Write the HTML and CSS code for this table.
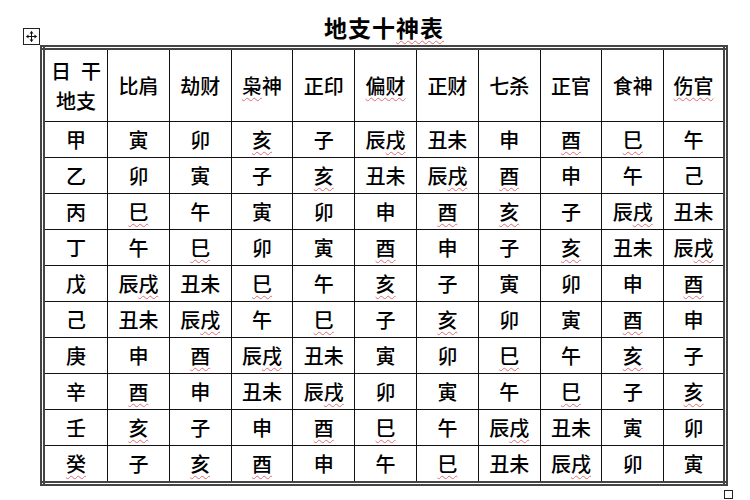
FILE: index.html
```html
<!DOCTYPE html>
<html lang="zh">
<head>
<meta charset="utf-8">
<link rel="stylesheet" href="styles.css">
</head>
<body>
<div class="page">
  <h1 class="title">地支十<span class="w">神表</span></h1>
  <div class="table-wrap">
    <span class="move-handle">
      <svg width="11" height="11" viewBox="0 0 11 11">
        <path d="M5.5 0.5 L5.5 10.5 M0.5 5.5 L10.5 5.5" stroke="#111" stroke-width="1" fill="none"/>
        <path d="M5.5 0 L3.5 2.5 L7.5 2.5 Z M5.5 11 L3.5 8.5 L7.5 8.5 Z M0 5.5 L2.5 3.5 L2.5 7.5 Z M11 5.5 L8.5 3.5 L8.5 7.5 Z" fill="#111"/>
      </svg>
    </span>
    <table class="shishen">
      <thead>
        <tr>
          <th class="corner">日&ensp;干<br>地支</th>
          <th>比肩</th>
          <th>劫财</th>
          <th><span class="w">枭</span>神</th>
          <th>正印</th>
          <th><span class="w">偏财</span></th>
          <th>正财</th>
          <th>七杀</th>
          <th>正官</th>
          <th>食神</th>
          <th><span class="w">伤官</span></th>
        </tr>
      </thead>
      <tbody>
        <tr><td>甲</td><td>寅</td><td>卯</td><td><span class="w">亥</span></td><td>子</td><td>辰<span class="w">戌</span></td><td>丑未</td><td>申</td><td><span class="w">酉</span></td><td><span class="w">巳</span></td><td>午</td></tr>
        <tr><td>乙</td><td>卯</td><td>寅</td><td>子</td><td><span class="w">亥</span></td><td>丑未</td><td>辰<span class="w">戌</span></td><td><span class="w">酉</span></td><td>申</td><td>午</td><td>己</td></tr>
        <tr><td>丙</td><td><span class="w">巳</span></td><td>午</td><td>寅</td><td>卯</td><td>申</td><td><span class="w">酉</span></td><td><span class="w">亥</span></td><td>子</td><td>辰<span class="w">戌</span></td><td>丑未</td></tr>
        <tr><td>丁</td><td>午</td><td><span class="w">巳</span></td><td>卯</td><td>寅</td><td><span class="w">酉</span></td><td>申</td><td>子</td><td><span class="w">亥</span></td><td>丑未</td><td>辰<span class="w">戌</span></td></tr>
        <tr><td>戊</td><td>辰<span class="w">戌</span></td><td>丑未</td><td><span class="w">巳</span></td><td>午</td><td><span class="w">亥</span></td><td>子</td><td>寅</td><td>卯</td><td>申</td><td><span class="w">酉</span></td></tr>
        <tr><td>己</td><td>丑未</td><td>辰<span class="w">戌</span></td><td>午</td><td><span class="w">巳</span></td><td>子</td><td><span class="w">亥</span></td><td>卯</td><td>寅</td><td><span class="w">酉</span></td><td>申</td></tr>
        <tr><td>庚</td><td>申</td><td><span class="w">酉</span></td><td>辰<span class="w">戌</span></td><td>丑未</td><td>寅</td><td>卯</td><td><span class="w">巳</span></td><td>午</td><td><span class="w">亥</span></td><td>子</td></tr>
        <tr><td>辛</td><td><span class="w">酉</span></td><td>申</td><td>丑未</td><td>辰<span class="w">戌</span></td><td>卯</td><td>寅</td><td>午</td><td><span class="w">巳</span></td><td>子</td><td><span class="w">亥</span></td></tr>
        <tr><td>壬</td><td><span class="w">亥</span></td><td>子</td><td>申</td><td><span class="w">酉</span></td><td><span class="w">巳</span></td><td>午</td><td>辰<span class="w">戌</span></td><td>丑未</td><td>寅</td><td>卯</td></tr>
        <tr><td><span class="w">癸</span></td><td>子</td><td><span class="w">亥</span></td><td><span class="w">酉</span></td><td>申</td><td>午</td><td><span class="w">巳</span></td><td>丑未</td><td>辰<span class="w">戌</span></td><td>卯</td><td>寅</td></tr>
      </tbody>
    </table>
    <span class="resize-handle"></span>
  </div>
</div>
</body>
</html>
```

FILE: styles.css
```css
html, body {
  margin: 0;
  padding: 0;
  background: #ffffff;
}

body {
  font-family: "Noto Sans CJK SC", "Noto Sans CJK JP", sans-serif;
  color: #000;
}

.page {
  width: 750px;
  height: 500px;
  padding: 15px 0 0 40px;
  box-sizing: border-box;
}

.title {
  width: 688px;
  margin: 0 0 6px 0;
  text-align: center;
  font-size: 23px;
  line-height: 24px;
  font-weight: 700;
  letter-spacing: 1px;
  color: #000;
}

.table-wrap {
  position: relative;
  width: 688px;
}

.move-handle {
  position: absolute;
  left: -17px;
  top: -17px;
  width: 15px;
  height: 15px;
  border: 1px solid #222;
  background: #fff;
  display: flex;
  align-items: center;
  justify-content: center;
}

.resize-handle {
  position: absolute;
  right: -5px;
  bottom: -13px;
  width: 7px;
  height: 7px;
  border: 1px solid #222;
  background: #fff;
}

.shishen {
  width: 688px;
  border-collapse: collapse;
  border: 5px double #444;
  table-layout: fixed;
}

.shishen th,
.shishen td {
  border: 1.5px solid #111;
  text-align: center;
  vertical-align: middle;
  padding: 0;
  font-size: 20px;
  font-weight: 500;
  color: #000;
  line-height: 22px;
  white-space: nowrap;
}

.shishen th {
  height: 71px;
}

.shishen td {
  height: 35px;
}

.shishen th.corner {
  width: 62px;
  line-height: 30px;
}

.w {
  text-decoration: underline wavy #e06b74;
  text-decoration-thickness: 1px;
  text-underline-offset: 3px;
}
```
